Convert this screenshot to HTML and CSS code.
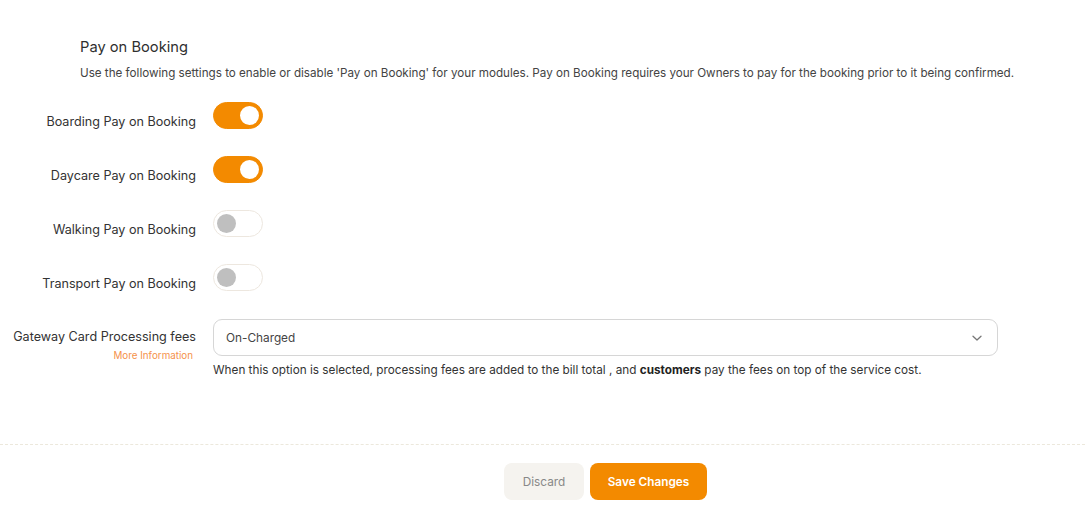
FILE: index.html
```html
<!DOCTYPE html>
<html>
<head>
<meta charset="utf-8">
<link rel="stylesheet" href="styles.css">
</head>
<body>
<div class="page">
  <div class="intro">
    <h2 class="title">Pay on Booking</h2>
    <p class="desc">Use the following settings to enable or disable 'Pay on Booking' for your modules. Pay on Booking requires your Owners to pay for the booking prior to it being confirmed.</p>
  </div>
  <div class="form">
    <div class="row">
      <div class="label">Boarding Pay on Booking</div>
      <div class="toggle on"><span class="knob"></span></div>
    </div>
    <div class="row">
      <div class="label">Daycare Pay on Booking</div>
      <div class="toggle on"><span class="knob"></span></div>
    </div>
    <div class="row">
      <div class="label">Walking Pay on Booking</div>
      <div class="toggle"><span class="knob"></span></div>
    </div>
    <div class="row">
      <div class="label">Transport Pay on Booking</div>
      <div class="toggle"><span class="knob"></span></div>
    </div>
    <div class="row select-row">
      <div class="label">
        <div class="label-main">Gateway Card Processing fees</div>
        <div class="more">More Information</div>
      </div>
      <div class="control">
        <div class="select">
          <span>On-Charged</span>
          <svg width="12" height="12" viewBox="0 0 12 12"><path d="M2 4.2 L6 8 L10 4.2" fill="none" stroke="#777" stroke-width="1.3" stroke-linecap="round" stroke-linejoin="round"/></svg>
        </div>
        <p class="help">When this option is selected, processing fees are added to the bill total , and <b>customers</b> pay the fees on top of the service cost.</p>
      </div>
    </div>
  </div>
  <div class="footer">
    <button class="btn discard">Discard</button>
    <button class="btn save">Save Changes</button>
  </div>
</div>
</body>
</html>
```
FILE: styles.css
```css
* { box-sizing: border-box; }
html, body { margin: 0; padding: 0; background: #fff; }
body { font-family: Inter, "Noto Sans", Arial, sans-serif; color: #333; }
.page { width: 1085px; }
.intro { padding: 37px 0 0 80px; }
.title { margin: 0; font-size: 14.7px; font-weight: 400; line-height: 20px; color: #2f2f2f; }
.desc { margin: 8px 0 0; font-size: 11.65px; line-height: 16px; color: #444; }
.form { margin-top: 21px; display: flex; flex-direction: column; gap: 27px; }
.row { display: flex; align-items: flex-start; gap: 17px; }
.label { width: 196px; flex: none; text-align: right; font-size: 12.6px; line-height: 15px; color: #333; padding-top: 12px; }
.toggle { width: 50px; height: 27px; border-radius: 14px; border: 1px solid #ede7df; background: #fff; position: relative; flex: none; }
.toggle .knob { position: absolute; top: 3px; left: 3px; width: 19px; height: 19px; border-radius: 50%; background: #bfbfbf; }
.toggle.on { background: #f38a00; border-color: #f38a00; }
.toggle.on .knob { left: auto; right: 3px; background: #fff; }
.select-row { margin-top: 1px; }
.select-row .label { padding-top: 9px; line-height: 18px; }
.label-main { line-height: 18px; }
.more { font-size: 9.8px; line-height: 14px; color: #f5914a; margin-top: 3px; padding-right: 3px; }
.control { width: 785px; }
.select { height: 37px; border: 1px solid #d6d6d6; border-radius: 9px; display: flex; align-items: center; justify-content: space-between; padding: 0 14px 0 12px; font-size: 11.8px; color: #444; }
.help { margin: 6px 0 0; font-size: 11.75px; line-height: 16px; color: #333; }
.help b { font-weight: 700; color: #222; }
.footer { margin-top: 66px; border-top: 1px dashed #ece8dc; padding-top: 18px; display: flex; justify-content: center; gap: 6px; padding-left: 126px; }
.btn { height: 37px; border: none; border-radius: 8px; font-family: inherit; font-size: 11.8px; padding: 0; }
.discard { width: 80px; background: #f5f3ef; color: #888; }
.save { width: 117px; background: #f38a00; color: #fff; font-weight: 600; }
```
